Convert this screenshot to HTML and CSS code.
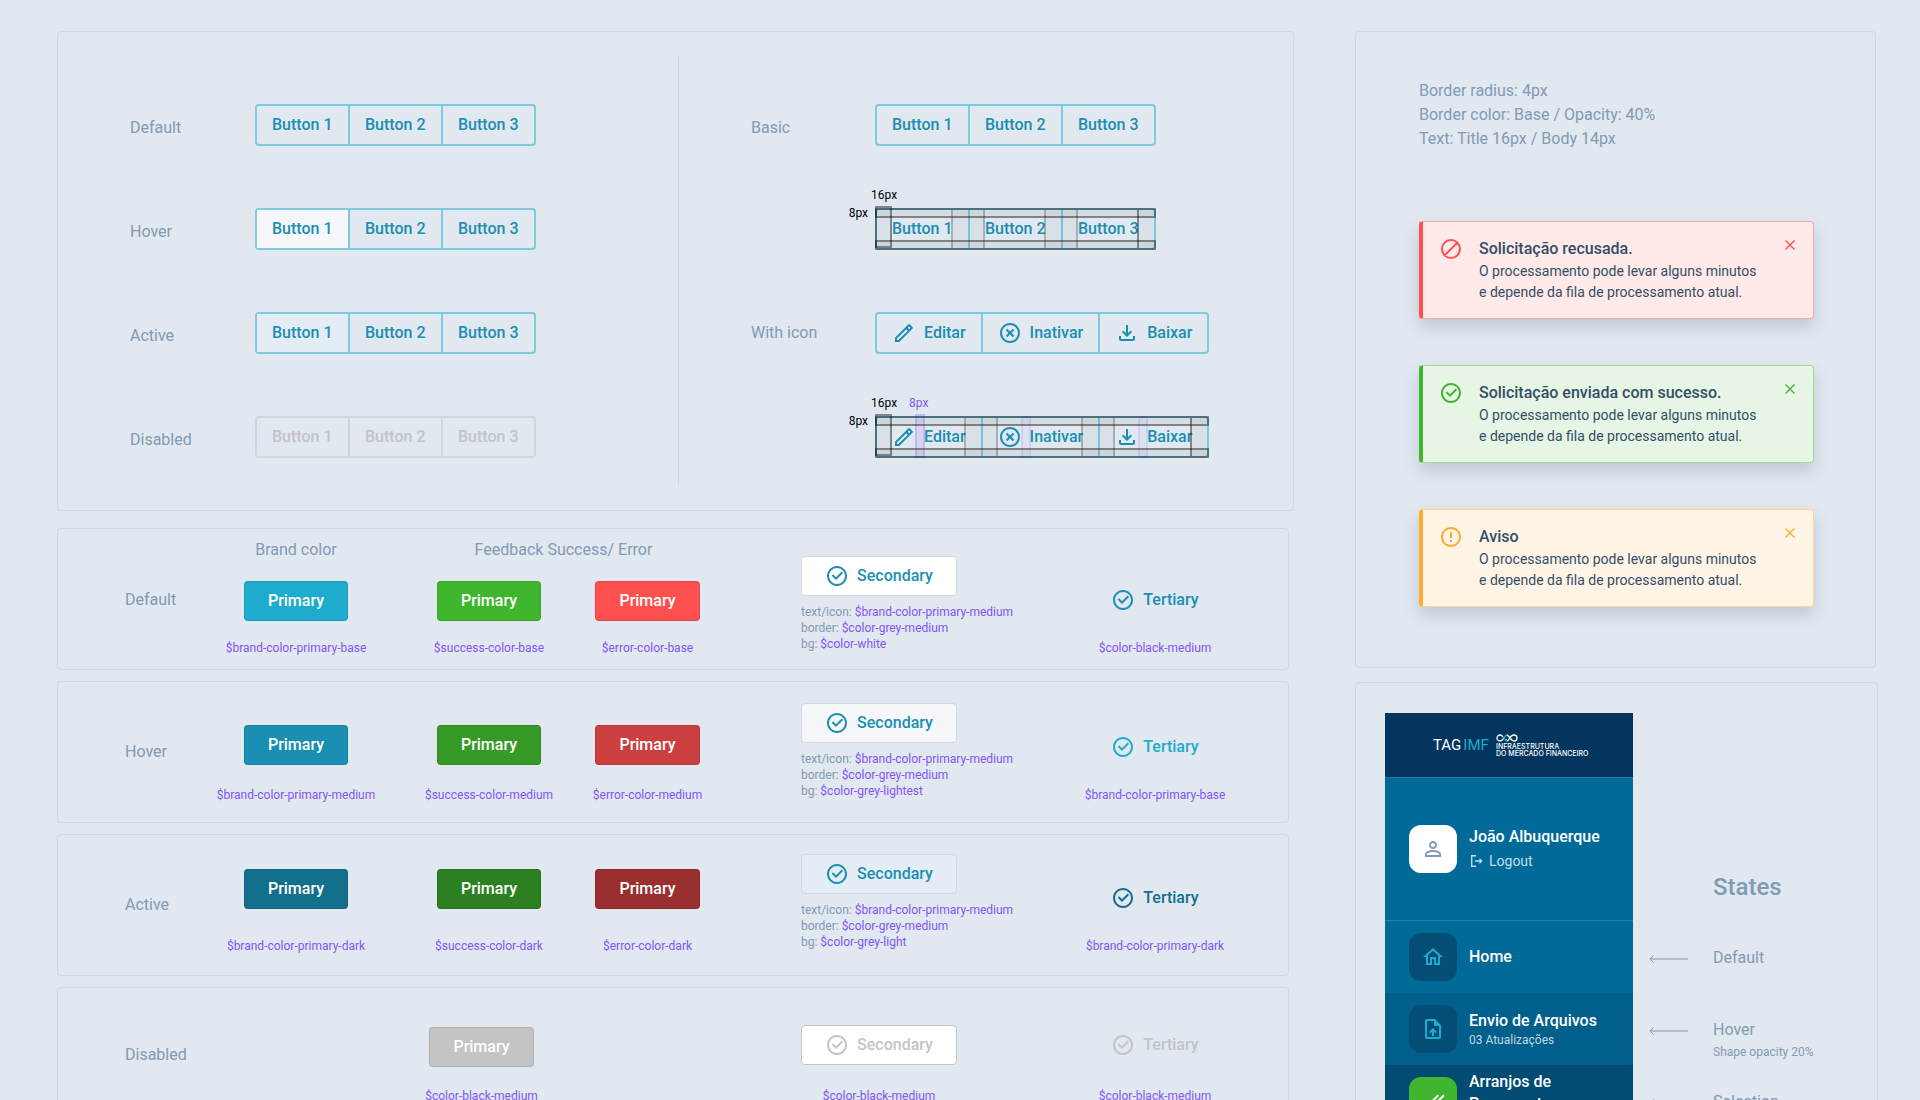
FILE: index.html
```html
<!DOCTYPE html>
<html lang="pt-BR">
<head>
<meta charset="utf-8">
<meta name="viewport" content="width=device-width, initial-scale=1">
<title>TAG IMF – Components</title>
<link rel="stylesheet" href="styles.css">
</head>
<body>
<svg class="sprite" aria-hidden="true">
  <symbol id="i-check" viewBox="0 0 24 24"><path d="M12 22C6.477 22 2 17.523 2 12S6.477 2 12 2s10 4.477 10 10-4.477 10-10 10zm0-2a8 8 0 1 0 0-16 8 8 0 0 0 0 16zm-.997-4L6.76 11.757l1.414-1.414 2.829 2.829 5.656-5.657 1.415 1.414L11.003 16z"/></symbol>
  <symbol id="i-cancel" viewBox="0 0 24 24"><path d="M12 22C6.477 22 2 17.523 2 12S6.477 2 12 2s10 4.477 10 10-4.477 10-10 10zm0-2a8 8 0 1 0 0-16 8 8 0 0 0 0 16zm0-9.414l2.828-2.829 1.415 1.415L13.414 12l2.829 2.828-1.415 1.415L12 13.414l-2.828 2.829-1.415-1.415L10.586 12 7.757 9.172l1.415-1.415L12 10.586z"/></symbol>
  <symbol id="i-edit" viewBox="0 0 24 24"><path d="M15.728 9.686l-1.414-1.414L5 17.586V19h1.414l9.314-9.314zm1.414-1.414l1.414-1.414-1.414-1.414-1.414 1.414 1.414 1.414zM7.242 21H3v-4.243L16.435 3.322a1 1 0 0 1 1.414 0l2.829 2.829a1 1 0 0 1 0 1.414L7.243 21z"/></symbol>
  <symbol id="i-download" viewBox="0 0 24 24"><path d="M18 15v3H6v-3H4v3c0 1.1.9 2 2 2h12c1.1 0 2-.9 2-2v-3h-2zm-1-4l-1.41-1.41L13 12.17V4h-2v8.17L8.41 9.59 7 11l5 5 5-5z"/></symbol>
  <symbol id="i-block" viewBox="0 0 24 24"><path d="M5.6 18.4 18.4 5.6M21 12a9 9 0 1 1-18 0 9 9 0 0 1 18 0z" fill="none" stroke="currentColor" stroke-width="2"/></symbol>
  <symbol id="i-alert" viewBox="0 0 24 24"><path d="M11 15h2v2h-2zm0-8h2v6h-2zm.99-5C6.47 2 2 6.48 2 12s4.47 10 9.99 10C17.52 22 22 17.52 22 12S17.52 2 11.99 2zM12 20c-4.42 0-8-3.58-8-8s3.58-8 8-8 8 3.58 8 8-3.58 8-8 8z"/></symbol>
  <symbol id="i-close" viewBox="0 0 16 16"><path d="M3.500 3.500l9 9m0-9l-9 9" fill="none" stroke="currentColor" stroke-width="1.400"/></symbol>
  <symbol id="i-user" viewBox="0 0 24 24"><path d="M12 5.900c1.160 0 2.100.940 2.100 2.100s-.940 2.100-2.100 2.100S9.900 9.160 9.900 8s.940-2.100 2.100-2.100m0 9c2.970 0 6.100 1.460 6.100 2.100v1.100H5.900V17c0-.640 3.130-2.100 6.100-2.100M12 4C9.790 4 8 5.790 8 8s1.790 4 4 4 4-1.790 4-4-1.790-4-4-4zm0 9c-2.670 0-8 1.340-8 4v3h16v-3c0-2.660-5.330-4-8-4z"/></symbol>
  <symbol id="i-logout" viewBox="0 0 16 16"><path d="M7 2.700H2.700v10.600H7M6 8h6.500" fill="none" stroke="currentColor" stroke-width="1.400"/><path d="M10.500 5l3 3-3 3z"/></symbol>
  <symbol id="i-home" viewBox="0 0 24 24"><path d="M12 5.690l5 4.500V18h-2v-6H9v6H7v-7.810l5-4.500M12 3L2 12h3v8h6v-6h2v6h6v-8h3L12 3z"/></symbol>
  <symbol id="i-upload" viewBox="0 0 24 24"><path d="M14 2H6c-1.100 0-1.990.900-1.990 2L4 20c0 1.100.890 2 1.990 2H18c1.100 0 2-.900 2-2V8l-6-6zm4 18H6V4h7v5h5v11zM8 15.010l1.410 1.410L11 14.840V19h2v-4.160l1.590 1.590L16 15.010 12.010 11 8 15.010z"/></symbol>
  <symbol id="i-done" viewBox="0 0 24 24"><path d="M18 7l-1.410-1.410-6.340 6.340 1.410 1.410L18 7zm4.240-1.410L11.660 16.170 7.480 12l-1.410 1.410L11.660 19l12-12-1.420-1.410zM.410 13.410L6 19l1.410-1.410L1.830 12 .410 13.410z"/></symbol>
  <symbol id="i-arrow" viewBox="0 0 39 8"><path d="M1 4h38M4.500.500L1 4l3.500 3.500" fill="none" stroke="currentColor"/></symbol>
</svg>

<main class="canvas">
  <div class="column">
    <section class="panel groups">
      <div class="half">
        <div class="row row--low"><span class="label">Default</span>
          <div class="segment"><button>Button 1</button><button>Button 2</button><button>Button 3</button></div></div>
        <div class="row row--low"><span class="label">Hover</span>
          <div class="segment"><button class="is-hover">Button 1</button><button>Button 2</button><button>Button 3</button></div></div>
        <div class="row row--low"><span class="label">Active</span>
          <div class="segment"><button class="is-active">Button 1</button><button>Button 2</button><button>Button 3</button></div></div>
        <div class="row row--low"><span class="label">Disabled</span>
          <div class="segment segment--off"><button disabled>Button 1</button><button disabled>Button 2</button><button disabled>Button 3</button></div></div>
      </div>
      <div class="rule"></div>
      <div class="half">
        <div class="row row--low"><span class="label">Basic</span>
          <div class="segment"><button>Button 1</button><button>Button 2</button><button>Button 3</button></div></div>
        <div class="row"><span></span>
          <div class="segment segment--spec"><button>Button 1</button><button>Button 2</button><button>Button 3</button>
            <span class="measure measure--x">16px</span><span class="measure measure--y">8px</span></div></div>
        <div class="row"><span class="label">With icon</span>
          <div class="segment">
            <button><svg class="icon"><use href="#i-edit"/></svg><i class="gap"></i>Editar</button>
            <button><svg class="icon"><use href="#i-cancel"/></svg><i class="gap"></i>Inativar</button>
            <button><svg class="icon"><use href="#i-download"/></svg><i class="gap"></i>Baixar</button></div></div>
        <div class="row"><span></span>
          <div class="segment segment--spec">
            <button><svg class="icon"><use href="#i-edit"/></svg><i class="gap"></i>Editar</button>
            <button><svg class="icon"><use href="#i-cancel"/></svg><i class="gap"></i>Inativar</button>
            <button><svg class="icon"><use href="#i-download"/></svg><i class="gap"></i>Baixar</button>
            <span class="measure measure--x">16px</span><span class="measure measure--gap">8px</span><span class="measure measure--y">8px</span></div></div>
      </div>
    </section>

    <div class="variants">
      <section class="panel variant variant--default">
        <span class="label">Default</span>
        <div class="cell cell--brand"><h3 class="label heading">Brand color</h3><button class="btn brand">Primary</button><code>$brand-color-primary-base</code></div>
        <div class="feedback"><h3 class="label heading">Feedback Success/ Error</h3>
          <div class="cell"><button class="btn success">Primary</button><code>$success-color-base</code></div>
          <div class="cell"><button class="btn error">Primary</button><code>$error-color-base</code></div></div>
        <div class="cell cell--secondary"><button class="btn secondary"><svg class="icon"><use href="#i-check"/></svg>Secondary</button>
          <p class="notes">text/icon: <code>$brand-color-primary-medium</code><br>border: <code>$color-grey-medium</code><br>bg: <code>$color-white</code></p></div>
        <div class="cell cell--tertiary"><button class="btn tertiary"><svg class="icon"><use href="#i-check"/></svg>Tertiary</button><code>$color-black-medium</code></div>
      </section>
      <section class="panel variant variant--hover">
        <span class="label">Hover</span>
        <div class="cell cell--brand"><button class="btn brand">Primary</button><code>$brand-color-primary-medium</code></div>
        <div class="feedback">
          <div class="cell"><button class="btn success">Primary</button><code>$success-color-medium</code></div>
          <div class="cell"><button class="btn error">Primary</button><code>$error-color-medium</code></div></div>
        <div class="cell cell--secondary"><button class="btn secondary"><svg class="icon"><use href="#i-check"/></svg>Secondary</button>
          <p class="notes">text/icon: <code>$brand-color-primary-medium</code><br>border: <code>$color-grey-medium</code><br>bg: <code>$color-grey-lightest</code></p></div>
        <div class="cell cell--tertiary"><button class="btn tertiary"><svg class="icon"><use href="#i-check"/></svg>Tertiary</button><code>$brand-color-primary-base</code></div>
      </section>
      <section class="panel variant variant--active">
        <span class="label">Active</span>
        <div class="cell cell--brand"><button class="btn brand">Primary</button><code>$brand-color-primary-dark</code></div>
        <div class="feedback">
          <div class="cell"><button class="btn success">Primary</button><code>$success-color-dark</code></div>
          <div class="cell"><button class="btn error">Primary</button><code>$error-color-dark</code></div></div>
        <div class="cell cell--secondary"><button class="btn secondary"><svg class="icon"><use href="#i-check"/></svg>Secondary</button>
          <p class="notes">text/icon: <code>$brand-color-primary-medium</code><br>border: <code>$color-grey-medium</code><br>bg: <code>$color-grey-light</code></p></div>
        <div class="cell cell--tertiary"><button class="btn tertiary"><svg class="icon"><use href="#i-check"/></svg>Tertiary</button><code>$brand-color-primary-dark</code></div>
      </section>
      <section class="panel variant variant--disabled">
        <span class="label">Disabled</span>
        <div class="cell cell--brand"></div>
        <div class="feedback">
          <div class="cell"><button class="btn off" disabled>Primary</button><code>$color-black-medium</code></div></div>
        <div class="cell cell--secondary"><button class="btn secondary" disabled><svg class="icon"><use href="#i-check"/></svg>Secondary</button><code>$color-black-medium</code></div>
        <div class="cell cell--tertiary"><button class="btn tertiary" disabled><svg class="icon"><use href="#i-check"/></svg>Tertiary</button><code>$color-black-medium</code></div>
      </section>
    </div>
  </div>

  <div class="column column--right">
    <section class="panel messages">
      <p class="label">Border radius: 4px<br>Border color: Base / Opacity: 40%<br>Text: Title 16px / Body 14px</p>
      <div class="alerts">
        <article class="alert alert--error"><svg class="icon"><use href="#i-block"/></svg>
          <div class="alert-text"><h4>Solicitação recusada.</h4><p>O processamento pode levar alguns minutos<br>e depende da fila de processamento atual.</p></div>
          <button class="close" aria-label="Fechar"><svg><use href="#i-close"/></svg></button></article>
        <article class="alert alert--success"><svg class="icon"><use href="#i-check"/></svg>
          <div class="alert-text"><h4>Solicitação enviada com sucesso.</h4><p>O processamento pode levar alguns minutos<br>e depende da fila de processamento atual.</p></div>
          <button class="close" aria-label="Fechar"><svg><use href="#i-close"/></svg></button></article>
        <article class="alert alert--warning"><svg class="icon"><use href="#i-alert"/></svg>
          <div class="alert-text"><h4>Aviso</h4><p>O processamento pode levar alguns minutos<br>e depende da fila de processamento atual.</p></div>
          <button class="close" aria-label="Fechar"><svg><use href="#i-close"/></svg></button></article>
      </div>
    </section>

    <section class="panel menu">
      <nav class="sidebar">
        <header class="brand-bar">
          <div class="wordmark">TAG<span>IMF</span></div>
          <div class="tagline">
            <svg viewBox="0 0 22 8" fill="none" stroke-width="1.300"><path stroke="#fff" d="M8 4C6.500 6 5.500 7 4 7a3 3 0 0 1 0-6c1 0 2 .5 3 2M10 5.500C11 7 11.500 7 12 6.500c1.500-1.500 2.500-5.500 6-5.500a3 3 0 0 1 0 6c-1.500 0-2.500-1-4-3C12.500 2 11.500 1 11 1"/><path stroke="#1fabce" d="M7 3c1.500 2 2.500 4 4 4M8 4c1-2 2-3 3-3"/></svg>
            <p>INFRAESTRUTURA<br>DO MERCADO FINANCEIRO</p>
          </div>
        </header>
        <div class="user">
          <span class="tile tile--white"><svg class="icon"><use href="#i-user"/></svg></span>
          <div><strong>João Albuquerque</strong><a href="#logout" class="logout"><svg><use href="#i-logout"/></svg>Logout</a></div>
        </div>
        <a href="#home" class="item"><span class="tile"><svg class="icon"><use href="#i-home"/></svg></span>
          <span class="item-text">Home</span></a>
        <a href="#envio" class="item item--hover"><span class="tile"><svg class="icon"><use href="#i-upload"/></svg></span>
          <span class="item-text">Envio de Arquivos<small>03 Atualizações</small></span></a>
        <a href="#arranjos" class="item item--selected"><span class="tile tile--green"><svg class="icon"><use href="#i-done"/></svg></span>
          <span class="item-text">Arranjos de Pagamento<small>03 Atualizações</small></span></a>
      </nav>
      <div class="states">
        <h2>States</h2>
        <ul>
          <li><svg><use href="#i-arrow"/></svg><span class="label">Default</span></li>
          <li><svg><use href="#i-arrow"/></svg><span class="label">Hover<small>Shape opacity 20%</small></span></li>
          <li><svg><use href="#i-arrow"/></svg><span class="label">Selection</span></li>
        </ul>
      </div>
    </section>
  </div>
</main>
</body>
</html>
```
FILE: styles.css
```css
:root {
  --bg: #e1e8f0;
  --line: #cfd9e7;
  --muted: #829ab5;
  --ink: #334e68;
  --token: #8155f8;
  --brand: #1fabce;
  --brand-medium: #1a8fb2;
  --brand-dark: #12708c;
  --grey: #c4c4c4;
}

*, *::before, *::after { box-sizing: border-box; }

body, h2, h3, h4, p, ul { margin: 0; padding: 0; }

body {
  background: var(--bg);
  color: var(--ink);
  font: 400 16px/24px Roboto, "Liberation Sans", sans-serif;
}

button {
  border: 0;
  padding: 0;
  background: none;
  font: inherit;
  font-weight: 500;
  color: inherit;
}

a { color: inherit; text-decoration: none; }

code {
  font: 400 12px/16px Roboto, "Liberation Sans", sans-serif;
  color: var(--token);
  white-space: nowrap;
}

.sprite { display: none; }

.icon {
  flex: none;
  width: 24px;
  height: 24px;
  fill: currentColor;
}

.canvas {
  display: grid;
  grid-template-columns: minmax(0, 1237fr) minmax(0, 523fr);
  column-gap: 61px;
  align-items: start;
  height: 100vh;
  padding: 31px 42px 0 57px;
  overflow: hidden;
}

.panel {
  border: 1px solid var(--line);
  border-radius: 4px;
}

.label {
  font-weight: 400;
  font-size: 16px;
  color: var(--muted);
}

/* Button groups */
.groups {
  display: grid;
  grid-template-columns: minmax(0, 620fr) 1px minmax(0, 614fr);
  padding: 24px 0;
}

.rule { background: var(--line); }

.half {
  display: flex;
  flex-direction: column;
  gap: 62px;
  padding: 48px 0 28px 72px;
}

.row {
  display: grid;
  grid-template-columns: 125px max-content;
  align-items: center;
}

.rule + .half .row { grid-template-columns: 124px max-content; }

.row--low .label { padding-top: 5px; }

.segment {
  position: relative;
  display: flex;
  height: 42px;
  border: 2px solid rgba(31, 171, 206, .5);
  border-radius: 4px;
  color: var(--brand-medium);
}

.segment button {
  position: relative;
  display: flex;
  align-items: center;
  min-width: 91px;
  padding: 0 15px;
}

.segment button + button {
  min-width: 93px;
  border-left: 2px solid rgba(31, 171, 206, .5);
}

.segment .is-hover { background: #f5f7fb; }
.segment .is-active { background: #e4edf6; }

.segment--off,
.segment--off button + button { border-color: rgba(196, 196, 196, .5); }
.segment--off { color: var(--grey); }

.gap {
  position: relative;
  align-self: stretch;
  width: 8px;
}

/* Spacing guides drawn over a button group */
.segment--spec::before,
.segment--spec::after {
  content: "";
  position: absolute;
  z-index: 1;
  left: -2px;
  right: -2px;
  height: 10px;
  border: 2px solid rgba(0, 0, 0, .4);
  background: rgba(0, 0, 0, .05);
}

.segment--spec::before { top: -2px; }
.segment--spec::after { bottom: -2px; }

.segment--spec button::before,
.segment--spec button::after {
  content: "";
  position: absolute;
  top: 0;
  bottom: 0;
  width: 17px;
  background: rgba(0, 0, 0, .03);
}

.segment--spec button::before { left: -2px; border-right: 2px solid rgba(0, 0, 0, .22); }
.segment--spec button::after { right: 0; border-left: 2px solid rgba(0, 0, 0, .22); }

.segment--spec button:first-of-type::before {
  top: -4px;
  border: 2px solid rgba(0, 0, 0, .4);
}

.segment--spec button:last-of-type::after { border-left-color: rgba(0, 0, 0, .4); }

.segment--spec .gap::before {
  content: "";
  position: absolute;
  top: -2px;
  bottom: -2px;
  left: -1px;
  right: -1px;
  border: 2px solid rgba(129, 85, 248, .12);
  background: rgba(129, 85, 248, .04);
}

.segment--spec button:first-of-type .gap::before {
  top: -4px;
  border-color: rgba(129, 85, 248, .22);
  background: rgba(129, 85, 248, .12);
}

.measure {
  position: absolute;
  font-size: 12px;
  line-height: 16px;
  color: #000;
}

.measure--x { left: -6px; top: -23px; }
.measure--gap { left: 32px; top: -23px; color: var(--token); }
.measure--y { right: 100%; top: -5px; margin-right: 9px; }

/* Button variants */
.variants {
  display: flex;
  flex-direction: column;
  gap: 11px;
  margin: 17px 5px 0 0;
}

.variant {
  display: grid;
  grid-template-columns: 81fr 209fr 386fr 269fr 170fr 48fr;
  height: 142px;
  padding: 0 0 var(--bottom) 67px;
}

.variant > .label { align-self: center; margin-bottom: calc(0px - var(--bottom)); }

.variant--default { --bottom: 14px; --gap: 19px; }
.variant--hover { --bottom: 19px; --gap: 22px; }
.variant--active { --bottom: 21px; --gap: 29px; }
.variant--disabled { --bottom: 18px; --gap: 21px; height: 136px; }

.cell {
  display: flex;
  flex-direction: column;
  justify-content: flex-end;
  align-items: center;
  gap: var(--gap);
}

.cell--brand { width: 180px; }
.cell--brand .heading { margin: 9px 0 auto; }
.cell--secondary { width: 156px; gap: 23px; }
.cell--tertiary { width: 170px; gap: 20px; }

.feedback {
  display: grid;
  grid-template-columns: 148px 129px;
  column-gap: 20px;
  width: 297px;
}

.feedback .heading {
  grid-column: 1 / -1;
  padding-top: 9px;
  text-align: center;
}

.variant--disabled .feedback { grid-template-columns: 133px; }
.variant--disabled .cell--tertiary { gap: 23px; }

.btn {
  display: flex;
  align-items: center;
  gap: 8px;
  height: 40px;
  padding: 0 23px;
  border: 1px solid rgba(0, 0, 0, .1);
  border-radius: 4px;
  color: #fff;
}

.variant--default { --b: var(--brand); --s: #40b62f; --e: #ff5050; --sec: #fff; --ter: var(--brand-medium); }
.variant--hover { --b: var(--brand-medium); --s: #379a27; --e: #cc3f3f; --sec: #f5f7fb; --ter: var(--brand); }
.variant--active { --b: var(--brand-dark); --s: #2d8022; --e: #992f2f; --sec: #e4edf6; --ter: var(--brand-dark); }

.brand { background: var(--b); }
.success { background: var(--s); }
.error { background: var(--e); }
.off { background: var(--grey); }

.secondary {
  background: var(--sec);
  border-color: var(--line);
  color: var(--brand-medium);
}

.tertiary { border-color: transparent; color: var(--ter); }

.secondary:disabled { background: #fff; border-color: var(--grey); color: var(--grey); }
.tertiary:disabled { color: var(--grey); }

.notes {
  align-self: flex-start;
  margin: -15px 0 4px;
  font-size: 12px;
  line-height: 16px;
  white-space: nowrap;
  color: var(--muted);
}

/* Messages */
.messages {
  margin-right: 2px;
  padding: 47px 61px 60px 63px;
}

.alerts {
  display: grid;
  gap: 46px;
  margin-top: 70px;
}

.alert {
  display: flex;
  height: 98px;
  padding: 15px 15px 0 16px;
  border: 1px solid var(--edge);
  border-left: 4px solid var(--tone);
  border-radius: 4px;
  background: var(--fill);
  box-shadow: 0 8px 16px rgba(51, 78, 104, .2);
}

.alert--error { --tone: #ff5050; --edge: #ffa9a9; --fill: #ffe9e9; }
.alert--success { --tone: #40b62f; --edge: #a0da97; --fill: #e7f5e5; }
.alert--warning { --tone: #ffab2d; --edge: #ffd596; --fill: #fff4e6; }

.alert > .icon { color: var(--tone); }

.alert-text {
  flex: 1;
  padding-left: 16px;
  white-space: nowrap;
}

.alert h4 { font-size: 16px; font-weight: 500; line-height: 24px; }
.alert p { font-size: 14px; line-height: 21px; }

.close {
  width: 16px;
  height: 16px;
  color: var(--tone);
}

.close svg { display: block; width: 16px; height: 16px; }

/* Side menu */
.menu {
  display: flex;
  gap: 16px;
  margin-top: 14px;
  padding: 30px 0 30px 29px;
}

.sidebar {
  flex: none;
  width: 248px;
  background: #006a98;
  color: #fff;
  font-weight: 500;
}

.brand-bar {
  display: flex;
  align-items: center;
  gap: 7px;
  height: 65px;
  padding-left: 48px;
  border-bottom: 1px solid #1f7ba6;
  background: #03355f;
}

.wordmark {
  display: flex;
  gap: 2px;
  width: 56px;
  font: 400 15px/24px Roboto, "Liberation Sans", sans-serif;
}

.wordmark span { color: var(--brand); }

.tagline svg { display: block; width: 22px; height: 8px; }

.tagline p {
  margin-top: 1px;
  font: 500 7px/7px Inter, sans-serif;
  white-space: nowrap;
}

.user {
  display: flex;
  align-items: center;
  gap: 12px;
  height: 143px;
  padding-left: 24px;
  border-bottom: 1px solid #2680a9;
}

.user strong { display: block; font-weight: 500; }

.logout {
  display: flex;
  align-items: center;
  gap: 4px;
  font-size: 14px;
  font-weight: 400;
  color: #c6dde8;
}

.logout svg { width: 16px; height: 16px; fill: currentColor; }

.tile {
  display: grid;
  place-items: center;
  flex: none;
  width: 48px;
  height: 48px;
  border-radius: 12px;
  background: #044d75;
  color: var(--brand);
}

.tile--white { background: #fff; color: var(--muted); }
.tile--green { background: #40b62f; color: #fff; }

.item {
  display: flex;
  align-items: center;
  gap: 12px;
  height: 72px;
  padding: 0 24px;
  line-height: 22px;
}

.item--hover { background: #005f8b; }
.item--selected { background: #024c74; }

.item small {
  display: block;
  font-size: 12px;
  font-weight: 400;
  line-height: 16px;
  color: #c0d8e4;
}

.states { padding-top: 158px; }

.states h2 {
  padding-left: 64px;
  font-size: 24px;
  font-weight: 500;
  line-height: 32px;
  color: var(--muted);
}

.states ul { margin-top: 18px; list-style: none; }

.states li {
  display: flex;
  gap: 25px;
  height: 72px;
  padding-top: 25px;
}

.states svg {
  width: 39px;
  height: 8px;
  margin-top: 9px;
  color: var(--muted);
}

.states small { display: block; font-size: 12px; line-height: 20px; }
```
